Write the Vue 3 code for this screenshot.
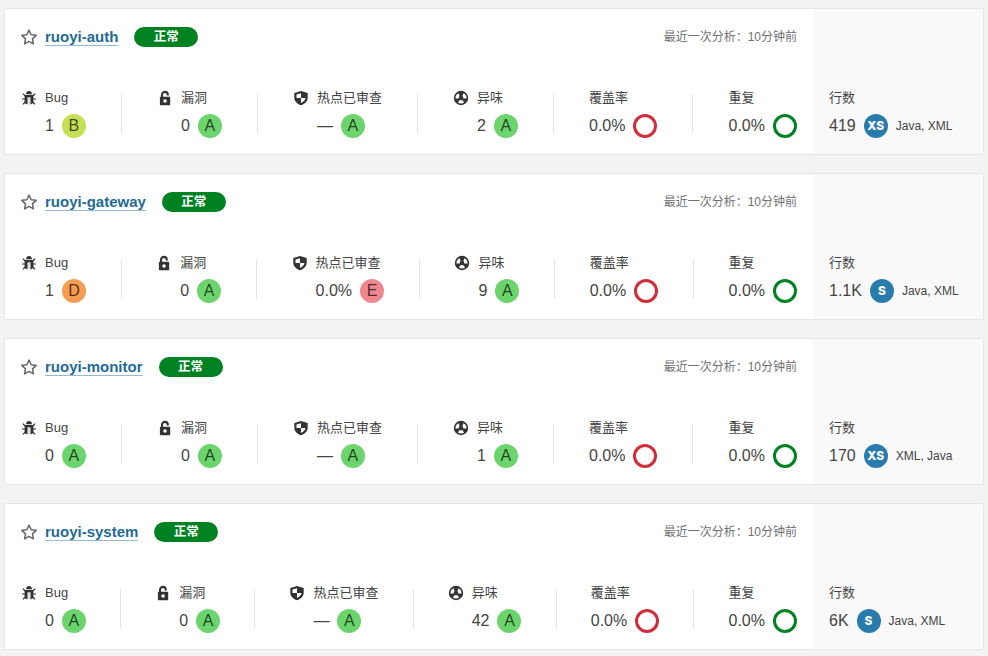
<script setup>
const make = (name, bug, bugRating, hotspot, hotspotRating, smells, lines, size, languages) => ({
  name,
  measures: [
    { icon: 'bug', label: 'Bug', value: bug, rating: bugRating },
    { icon: 'lock', label: '漏洞', value: '0', rating: 'A' },
    { icon: 'shield', label: '热点已审查', value: hotspot, rating: hotspotRating },
    { icon: 'smell', label: '异味', value: smells, rating: 'A' },
    { label: '覆盖率', value: '0.0%', ring: 'red' },
    { label: '重复', value: '0.0%', ring: 'green' },
  ],
  lines,
  size,
  languages,
})

const projects = [
  make('ruoyi-auth', '1', 'B', '—', 'A', '2', '419', 'XS', 'Java, XML'),
  make('ruoyi-gateway', '1', 'D', '0.0%', 'E', '9', '1.1K', 'S', 'Java, XML'),
  make('ruoyi-monitor', '0', 'A', '—', 'A', '1', '170', 'XS', 'XML, Java'),
  make('ruoyi-system', '0', 'A', '—', 'A', '42', '6K', 'S', 'Java, XML'),
]
</script>

<template>
  <main class="page">
    <article v-for="p in projects" :key="p.name" class="card">
      <section class="main">
        <header class="head">
          <svg class="star" viewBox="0 0 16 16">
            <path d="M8 1.100l2.150 4.600 5 .65-3.650 3.500.9 5L8 12.450l-4.400 2.400.9-5L.85 6.350l5-.65z" />
          </svg>
          <a class="name">{{ p.name }}</a>
          <span class="status">正常</span>
          <span class="date">最近一次分析：10分钟前</span>
        </header>
        <div class="measures">
          <template v-for="(m, i) in p.measures" :key="m.label">
            <i v-if="i" class="sep"></i>
            <div class="measure">
              <svg v-if="m.icon" class="icon" viewBox="0 0 16 16">
                <template v-if="m.icon === 'bug'">
                  <path d="M5 4.200C5.200 2.200 6.300 1 8 1s2.800 1.200 3 3.200z" />
                  <path d="M3.600 5h8.800v6.500c0 1.700-1.200 2.600-2.900 2.900V7.300h-3v7.100c-1.700-.3-2.900-1.200-2.900-2.900z" />
                  <path d="M7.500 7h1v7.500h-1z" opacity=".3" />
                  <path class="line" d="M1.800 3.600L4.300 6M14.200 3.600L11.700 6M1 9h3M15 9h-3M1.900 14.400l2.400-2.400M14.100 14.400l-2.400-2.400" />
                </template>
                <template v-else-if="m.icon === 'lock'">
                  <path class="lock-arc" d="M5 7.500V4.800a2.900 2.900 0 0 1 5.800 0v.8" />
                  <path fill-rule="evenodd" d="M3.900 6.700h8.300c.6 0 1 .4 1 1v6.600c0 .6-.4 1-1 1H3.900c-.6 0-1-.4-1-1V7.700c0-.6.4-1 1-1zM8.050 9.200a1.800 1.800 0 1 0 0 3.600 1.800 1.800 0 0 0 0-3.600z" />
                </template>
                <template v-else-if="m.icon === 'shield'">
                  <path fill-rule="evenodd" d="M8 .9l6.700 2v4.800c0 3.600-2.800 6.100-6.700 7.600C4.100 13.800 1.300 11.300 1.300 7.700V2.900zM8 3.200L3.500 4.500V8H8zM8 8v4.900c2.600-1.100 4.200-2.700 4.500-4.900z" />
                </template>
                <template v-else>
                  <path fill-rule="evenodd" d="M8 .8a7.200 7.200 0 1 0 0 14.400A7.200 7.200 0 0 0 8 .8zM6.700 6.100L5.400 3.200A5.500 5.500 0 0 0 2.500 8.400l3.300.1c-.2-1 .1-1.800.9-2.400zM9.300 6.100l1.300-2.900a5.500 5.500 0 0 1 2.900 5.200l-3.300.1c.2-1-.1-1.800-.9-2.400zM6.700 9.900L4.900 12.500c1.800 1.300 4.400 1.300 6.200 0L9.300 9.900c-.8.5-1.800.5-2.600 0z" />
                </template>
              </svg>
              <div class="info">
                <div class="label">{{ m.label }}</div>
                <div class="value">
                  <span>{{ m.value }}</span>
                  <b v-if="m.rating" class="rating" :class="m.rating">{{ m.rating }}</b>
                  <b v-else class="ring" :class="m.ring"></b>
                </div>
              </div>
            </div>
          </template>
        </div>
      </section>
      <aside class="side">
        <div class="label">行数</div>
        <div class="value">
          <span>{{ p.lines }}</span>
          <b class="size">{{ p.size }}</b>
          <small class="languages">{{ p.languages }}</small>
        </div>
      </aside>
    </article>
  </main>
</template>

<style>
body {
  background: #f3f3f3;
}
</style>

<style scoped>
.page {
  box-sizing: border-box;
  height: 656px;
  overflow: hidden;
  padding: 8px 4px 0;
  display: flex;
  flex-direction: column;
  gap: 18px;
  color: #444;
  font: 13px/20px "Liberation Sans", "Noto Sans CJK SC", sans-serif;
}
.card {
  box-sizing: border-box;
  flex: none;
  height: 147px;
  display: flex;
  background: #fff;
  border: 1px solid #e6e6e6;
  border-radius: 2px;
}
.main {
  box-sizing: border-box;
  width: 808px;
  padding: 18px 16px 0;
}
.head {
  display: flex;
  height: 20px;
}
.star {
  width: 16px;
  height: 16px;
  margin: 2px 8px 0 0;
  fill: none;
  stroke: #666;
  stroke-width: 1.5;
  stroke-linejoin: round;
}
.name {
  height: 18px;
  line-height: 20px;
  font-size: 15px;
  font-weight: 700;
  color: #236a97;
  border-bottom: 1px solid #95b9d0;
}
.status {
  width: 64px;
  height: 20px;
  margin-left: 16px;
  border-radius: 10px;
  background: #008223;
  color: #fff;
  font-size: 12.5px;
  font-weight: 700;
  text-align: center;
}
.date {
  margin-left: auto;
  font-size: 12px;
  color: #707070;
}
.measures {
  display: flex;
  justify-content: space-between;
  align-items: flex-start;
  margin-top: 41px;
}
.sep {
  width: 1px;
  height: 40px;
  margin-top: 6px;
  background: #e6e6e6;
}
.measure {
  display: flex;
}
.icon {
  width: 16px;
  height: 16px;
  margin: 2px 8px 0 0;
  fill: #333;
}
.line,
.lock-arc {
  fill: none;
  stroke: #333;
  stroke-width: 1.2;
}
.lock-arc {
  stroke-width: 2.1;
}
.label {
  height: 20px;
  white-space: nowrap;
}
.value {
  display: flex;
  align-items: center;
  gap: 8px;
  height: 24px;
  margin-top: 6px;
  font-size: 16px;
  white-space: nowrap;
}
.rating,
.ring,
.size {
  box-sizing: border-box;
  width: 24px;
  height: 24px;
  border-radius: 50%;
  text-align: center;
  line-height: 24px;
  font-weight: 400;
}
.rating {
  color: rgba(0, 0, 0, 0.7);
}
.A {
  background: #6cd46c;
}
.B {
  background: #c6e056;
}
.D {
  background: #f69d53;
}
.E {
  background: #f0878e;
}
.ring {
  border: 3px solid;
}
.red {
  border-color: #d02f3a;
}
.green {
  border-color: #008223;
}
.side {
  flex: 1;
  padding: 79px 0 0 16px;
  background: #f9f9f9;
}
.size {
  background: #297bae;
  color: #fff;
  font: 800 12px/24px Inter, "Open Sans", sans-serif;
}
.languages {
  font-size: 12px;
}
</style>
